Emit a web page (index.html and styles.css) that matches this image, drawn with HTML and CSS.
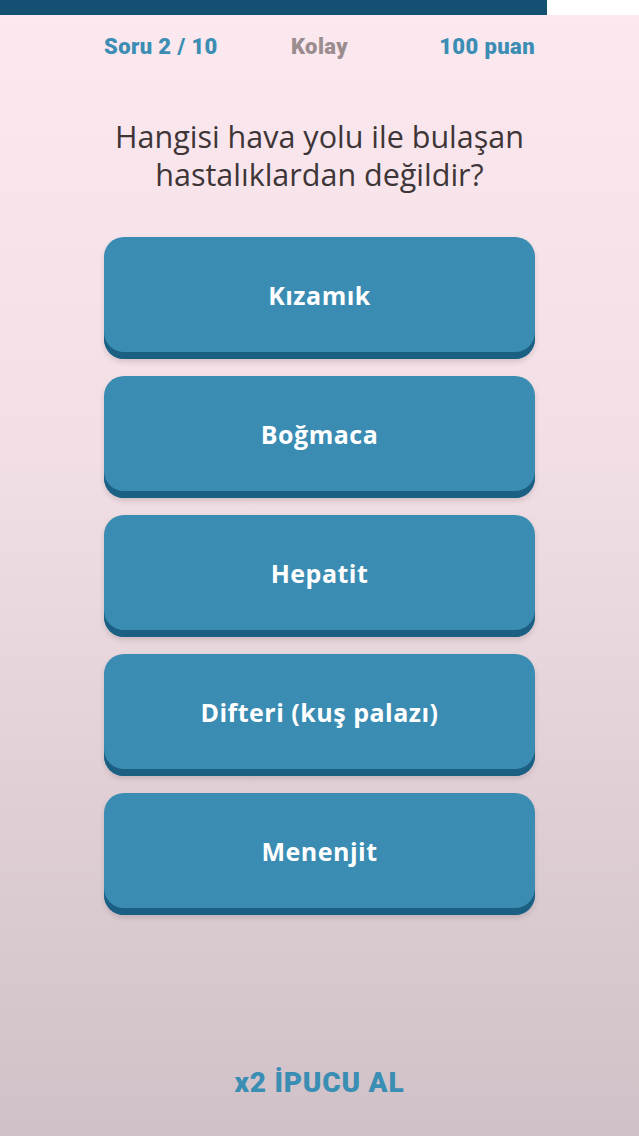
FILE: index.html
```html
<!DOCTYPE html>
<html lang="tr">
<head>
<meta charset="utf-8">
<link rel="stylesheet" href="styles.css">
</head>
<body>
<div class="screen">
  <div class="progress"><div class="progress-fill"></div></div>
  <div class="content">
    <div class="header">
      <span class="stat left">Soru 2 / 10</span>
      <span class="level">Kolay</span>
      <span class="stat right">100 puan</span>
    </div>
    <div class="question">Hangisi hava yolu ile bulaşan hastalıklardan değildir?</div>
    <div class="answers">
      <button class="answer">Kızamık</button>
      <button class="answer">Boğmaca</button>
      <button class="answer">Hepatit</button>
      <button class="answer">Difteri (kuş palazı)</button>
      <button class="answer">Menenjit</button>
    </div>
    <div class="spacer"></div>
    <div class="hint">x2 İPUCU AL</div>
  </div>
</div>
</body>
</html>
```
FILE: styles.css
```css
html, body {
  margin: 0;
  padding: 0;
}
body {
  width: 639px;
  height: 1136px;
  overflow: hidden;
  font-family: "Open Sans", "Noto Sans", sans-serif;
}
.screen {
  height: 1136px;
  display: flex;
  flex-direction: column;
  background: linear-gradient(180deg, #fbe9ef 0%, #f1dfe5 40%, #cfc1c7 100%);
}
.progress {
  height: 15px;
  background: #ffffff;
  flex: none;
}
.progress-fill {
  width: 547px;
  height: 100%;
  background: #154f72;
}
.content {
  flex: 1;
  width: 431px;
  margin: 0 auto;
  display: flex;
  flex-direction: column;
}
.header {
  display: grid;
  grid-template-columns: 1fr auto 1fr;
  align-items: center;
  margin-top: 17px;
  height: 28px;
  font-family: "Roboto", sans-serif;
  font-weight: 900;
  font-size: 22px;
  letter-spacing: 0.4px;
}
.left { justify-self: start; }
.right { justify-self: end; }
.stat { color: #3b8db3; }
.level { color: #9b8c8e; }
.question {
  margin-top: 57px;
  text-align: center;
  font-size: 30.5px;
  line-height: 38px;
  color: #3e3537;
  padding: 0;
}
.answers {
  margin-top: 44px;
  display: flex;
  flex-direction: column;
  gap: 17px;
}
.answer {
  height: 122px;
  border: none;
  border-radius: 20px;
  background: #3a8cb2;
  box-shadow: inset 0 -7px 0 #1b5f83, 0 3px 5px rgba(90, 60, 70, 0.18);
  padding: 0 0 7px 0;
  color: #ffffff;
  font-family: "Open Sans", sans-serif;
  font-weight: 700;
  font-size: 25px;
  letter-spacing: 0.5px;
}
.spacer { flex: 1; }
.hint {
  text-align: center;
  font-family: "Roboto", sans-serif;
  font-weight: 900;
  font-size: 28px;
  letter-spacing: 0.8px;
  color: #3a8db3;
  margin-bottom: 37px;
}
```
